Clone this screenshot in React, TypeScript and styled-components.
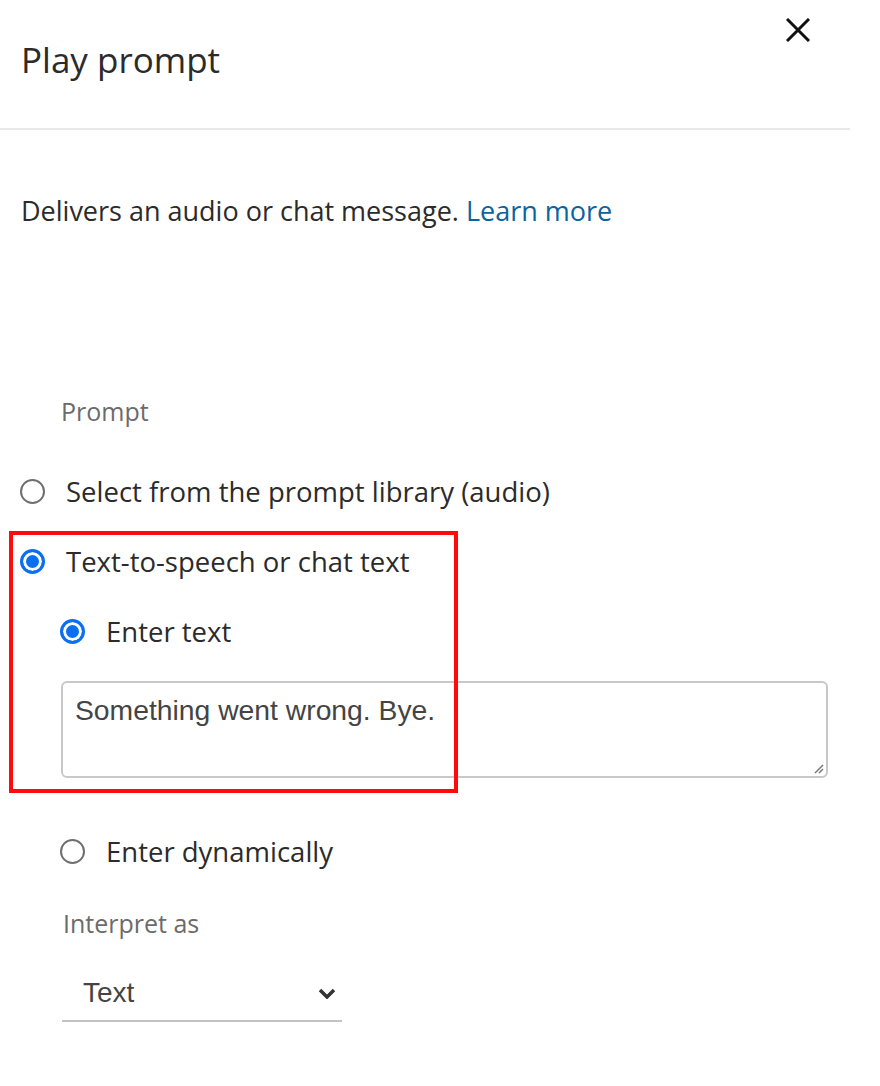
import React from "react";
import styled, { createGlobalStyle } from "styled-components";

const Global = createGlobalStyle`
  html, body { margin: 0; padding: 0; background: #ffffff; }
  body { font-family: "Open Sans", Lato, sans-serif; color: #2b2b2b; }
  * { box-sizing: border-box; }
`;

const Panel = styled.div`
  position: relative;
  width: 880px;
  min-height: 1086px;
`;

const Header = styled.header`
  width: 850px;
  height: 130px;
  display: flex;
  justify-content: space-between;
  align-items: flex-start;
  border-bottom: 2px solid #e9e9e9;
`;

const Title = styled.h1`
  margin: 40px 0 0 21px;
  font-size: 35px;
  line-height: 40px;
  font-weight: 400;
  color: #2b2b2b;
`;

const CloseButton = styled.button`
  margin: 18px 40px 0 0;
  width: 24px;
  height: 24px;
  padding: 0;
  border: none;
  background: none;
  display: flex;
`;

const Description = styled.p`
  margin: 63px 0 0 21px;
  font-size: 27px;
  line-height: 36px;
  color: #2b2b2b;
`;

const Link = styled.a`
  color: #0a64a0;
  text-decoration: none;
`;

const Fieldset = styled.div`
  margin-top: 167px;
  display: flex;
  flex-direction: column;
`;

const FieldLabel = styled.div<{ $left: number; $top?: number }>`
  padding-left: ${(p) => p.$left}px;
  margin-top: ${(p) => p.$top ?? 0}px;
  font-size: 25px;
  line-height: 30px;
  color: #6b6b6b;
`;

const RadioRow = styled.label<{ $indent: number; $top: number }>`
  display: flex;
  align-items: center;
  gap: 21px;
  height: 40px;
  margin-top: ${(p) => p.$top}px;
  padding-left: ${(p) => p.$indent}px;
  font-size: 27.5px;
  color: #2b2b2b;
`;

const RadioCircle = styled.span<{ $checked: boolean }>`
  width: 25px;
  height: 25px;
  border-radius: 50%;
  flex: none;
  border: ${(p) => (p.$checked ? "3px solid #0a6ff0" : "2px solid #6f6f6f")};
  background: ${(p) => (p.$checked ? "#0a6ff0" : "#ffffff")};
  box-shadow: ${(p) => (p.$checked ? "inset 0 0 0 3px #ffffff" : "none")};
`;

const TextArea = styled.div`
  margin: 30px 0 0 61px;
  width: 767px;
  height: 97px;
  border: 2px solid #c8c8c8;
  border-radius: 6px;
  padding: 11px 12px;
  font-family: "Liberation Sans", Arial, sans-serif;
  font-size: 28.3px;
  line-height: 32px;
  color: #444444;
  position: relative;
`;

const Grip = styled.svg`
  position: absolute;
  right: 2px;
  bottom: 2px;
`;

const SelectBox = styled.div`
  margin: 36px 0 0 62px;
  width: 280px;
  height: 48px;
  display: flex;
  align-items: center;
  justify-content: space-between;
  padding: 0 6px 8px 21px;
  border-bottom: 2px solid #c3c3c3;
  font-family: "Liberation Sans", Arial, sans-serif;
  font-size: 28px;
  color: #444444;
`;

const Annotation = styled.div`
  position: absolute;
  left: 9px;
  top: 531px;
  width: 449px;
  height: 262px;
  border: 4px solid #ff0b0b;
  pointer-events: none;
`;

const Radio = ({ checked, label, indent, top }: { checked: boolean; label: string; indent: number; top: number }) => (
  <RadioRow $indent={indent} $top={top}>
    <RadioCircle $checked={checked} />
    <span>{label}</span>
  </RadioRow>
);

export default function App() {
  return (
    <Panel>
      <Global />
      <Header>
        <Title>Play prompt</Title>
        <CloseButton aria-label="Close">
          <svg width="24" height="24" viewBox="0 0 24 24">
            <path d="M1 1 L23 23 M23 1 L1 23" stroke="#111" strokeWidth="3" />
          </svg>
        </CloseButton>
      </Header>
      <Description>
        Delivers an audio or chat message. <Link href="#">Learn more</Link>
      </Description>
      <Fieldset>
        <FieldLabel $left={61}>Prompt</FieldLabel>
        <Radio checked={false} label="Select from the prompt library (audio)" indent={20} top={45} />
        <Radio checked label="Text-to-speech or chat text" indent={20} top={30} />
        <Radio checked label="Enter text" indent={60} top={30} />
        <TextArea>
          Something went wrong. Bye.
          <Grip width="12" height="12" viewBox="0 0 12 12">
            <path d="M11 3 L3 11 M11 7 L7 11" stroke="#777" strokeWidth="1.5" />
          </Grip>
        </TextArea>
        <Radio checked={false} label="Enter dynamically" indent={60} top={53} />
        <FieldLabel $left={63} $top={37}>Interpret as</FieldLabel>
        <SelectBox>
          <span>Text</span>
          <svg width="18" height="11" viewBox="0 0 18 11">
            <path d="M2 2 L9 9 L16 2" stroke="#333" strokeWidth="3.5" fill="none" />
          </svg>
        </SelectBox>
      </Fieldset>
      <Annotation />
    </Panel>
  );
}
